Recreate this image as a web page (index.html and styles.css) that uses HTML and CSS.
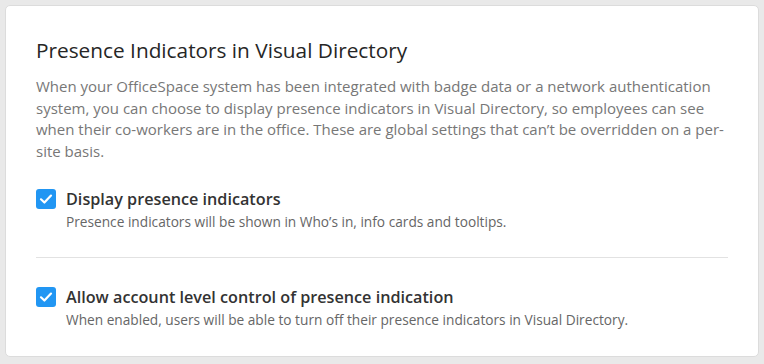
FILE: index.html
```html
<!DOCTYPE html>
<html lang="en">
<head>
    <meta charset="UTF-8">
    <title>Presence Indicators</title>
    <link rel="stylesheet" href="styles.css">
</head>
<body>
    <div class="card">
        <h2>Presence Indicators in Visual Directory</h2>
        <p class="intro">When your OfficeSpace system has been integrated with badge data or a network authentication system, you can choose to display presence indicators in Visual Directory, so employees can see when their co-workers are in the office. These are global settings that can’t be overridden on a per-site basis.</p>

        <div class="option">
            <span class="check">
                <svg width="16" height="16" viewBox="0 0 16 16"><path d="M3 8.3 L6.4 11.5 L13 4.6" fill="none" stroke="#fff" stroke-width="2.2" stroke-linecap="round" stroke-linejoin="round"/></svg>
            </span>
            <div class="option-text">
                <div class="option-title">Display presence indicators</div>
                <div class="option-desc">Presence indicators will be shown in Who’s in, info cards and tooltips.</div>
            </div>
        </div>

        <hr class="divider">

        <div class="option">
            <span class="check">
                <svg width="16" height="16" viewBox="0 0 16 16"><path d="M3 8.3 L6.4 11.5 L13 4.6" fill="none" stroke="#fff" stroke-width="2.2" stroke-linecap="round" stroke-linejoin="round"/></svg>
            </span>
            <div class="option-text">
                <div class="option-title">Allow account level control of presence indication</div>
                <div class="option-desc">When enabled, users will be able to turn off their presence indicators in Visual Directory.</div>
            </div>
        </div>
    </div>
</body>
</html>
```

FILE: styles.css
```css
body {
    margin: 0;
    padding: 5px;
    background-color: #e9e9e9;
    font-family: 'Open Sans', sans-serif;
    color: #333;
}
.card {
    background-color: white;
    border: 1px solid #dcdcdc;
    border-radius: 5px;
    padding: 30px 30px 22px 30px;
    height: 352px;
    box-sizing: border-box;
}
.card h2 {
    margin: 0;
    font-size: 20.8px;
    font-weight: 400;
    color: #262626;
    line-height: 28px;
}
.intro {
    margin: 12px 0 0 0;
    font-size: 15px;
    line-height: 21.7px;
    color: #777;
}
.option {
    display: flex;
    align-items: flex-start;
    margin-top: 25px;
}
.check {
    width: 20px;
    height: 20px;
    border-radius: 3px;
    background-color: #2196f3;
    display: flex;
    align-items: center;
    justify-content: center;
    margin-top: 1px;
    flex-shrink: 0;
}
.option-text {
    margin-left: 10px;
}
.option-title {
    font-size: 16.2px;
    font-weight: 600;
    color: #333;
    line-height: 22px;
}
.option-desc {
    font-size: 13.7px;
    color: #666;
    line-height: 20px;
    margin-top: 2px;
}
.divider {
    border: none;
    border-top: 1px solid #e2e2e2;
    margin: 25px 0 0 0;
}
.divider + .option {
    margin-top: 28px;
}
```
